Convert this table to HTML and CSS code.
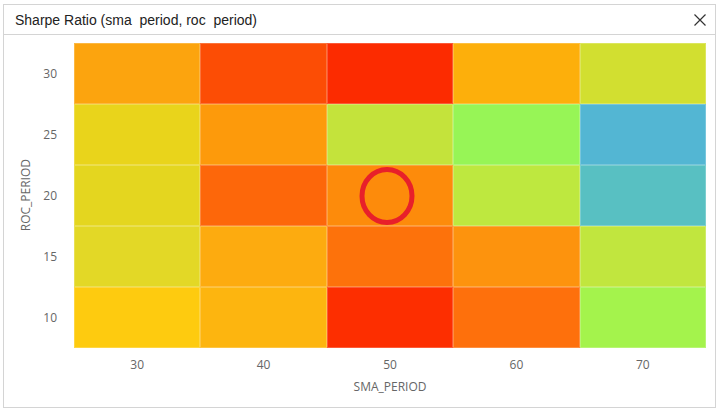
FILE: index.html
```html
<!DOCTYPE html>
<html>
<head>
<meta charset="utf-8">
<link rel="stylesheet" href="styles.css">
</head>
<body>
<div class="panel">
  <div class="header">
    <span class="title">Sharpe Ratio (sma&nbsp; period, roc&nbsp; period)</span>
    <svg class="close" width="12" height="12" viewBox="0 0 12 12"><path d="M0.5 0.5 L11.5 11.5 M11.5 0.5 L0.5 11.5" stroke="#333" stroke-width="1.2" fill="none"/></svg>
  </div>
  <div class="chart">
    <div class="plot-row">
      <div class="ytitle-col"><span class="ytitle">ROC_PERIOD</span></div>
      <div class="yticks">
        <span>30</span><span>25</span><span>20</span><span>15</span><span>10</span>
      </div>
      <div class="heatmap">
        <div class="cell c-fca40e"></div>
        <div class="cell c-fc4d05"></div>
        <div class="cell c-fc2b00"></div>
        <div class="cell c-fdaf0b"></div>
        <div class="cell c-d2df30"></div>

        <div class="cell c-e9d41b"></div>
        <div class="cell c-fd9a0b"></div>
        <div class="cell c-c4e33b"></div>
        <div class="cell c-97f556"></div>
        <div class="cell c-53b6d3"></div>

        <div class="cell c-e4d61f"></div>
        <div class="cell c-fd670a"></div>
        <div class="cell c-fd8b0b marked">
          <svg class="marker" width="58" height="62" viewBox="0 0 58 62"><ellipse cx="29" cy="31" rx="25" ry="26.5" fill="none" stroke="#e8202a" stroke-width="5"/></svg>
        </div>
        <div class="cell c-bee83f"></div>
        <div class="cell c-58c0c2"></div>

        <div class="cell c-e3d826"></div>
        <div class="cell c-fdab0f"></div>
        <div class="cell c-fd720b"></div>
        <div class="cell c-fd930d"></div>
        <div class="cell c-c1e63e"></div>

        <div class="cell c-fecb0f"></div>
        <div class="cell c-fdb50f"></div>
        <div class="cell c-fd2e00"></div>
        <div class="cell c-fe700c"></div>
        <div class="cell c-a4f34c"></div>
      </div>
    </div>
    <div class="xticks">
      <span>30</span><span>40</span><span>50</span><span>60</span><span>70</span>
    </div>
    <div class="xtitle">SMA_PERIOD</div>
  </div>
</div>
</body>
</html>
```
FILE: styles.css
```css
html, body {
  margin: 0;
  padding: 0;
  background: #ffffff;
}

.panel {
  box-sizing: border-box;
  width: 713px;
  height: 404px;
  margin: 4px 0 0 3px;
  border: 1px solid #d4d4d4;
  background: #ffffff;
  display: flex;
  flex-direction: column;
}

.header {
  height: 29px;
  border-bottom: 1px solid #d4d4d4;
  display: flex;
  align-items: center;
  justify-content: space-between;
  padding: 0 9px 0 11px;
}

.title {
  font-family: "Liberation Sans", Arial, sans-serif;
  font-size: 14px;
  color: #222222;
}

.close {
  display: block;
  margin-top: 1px;
}

.chart {
  padding-top: 8px;
  display: flex;
  flex-direction: column;
  font-family: "Open Sans", "Liberation Sans", sans-serif;
  font-size: 12px;
  color: #666666;
}

.plot-row {
  display: flex;
  height: 305px;
}

.ytitle-col {
  box-sizing: border-box;
  width: 30px;
  padding-left: 14px;
  display: flex;
  align-items: center;
}

.ytitle {
  writing-mode: vertical-rl;
  transform: rotate(180deg);
  line-height: 16px;
  width: 16px;
  white-space: nowrap;
}

.yticks {
  box-sizing: border-box;
  width: 40px;
  padding-right: 17px;
  display: grid;
  grid-template-rows: repeat(5, 61px);
  align-items: center;
  justify-items: end;
  line-height: 16px;
}

.heatmap {
  width: 632px;
  display: grid;
  grid-template-columns: repeat(5, 1fr);
  grid-template-rows: repeat(5, 61px);
}

.cell {
  box-sizing: border-box;
  border: 1px solid rgba(255, 255, 255, 0.22);
}

.marked {
  position: relative;
}

.marker {
  position: absolute;
  left: 50%;
  top: 50%;
  margin-left: -32px;
  margin-top: -31px;
}

.xticks {
  margin-left: 70px;
  width: 632px;
  margin-top: 7px;
  height: 20px;
  display: grid;
  grid-template-columns: repeat(5, 1fr);
  justify-items: center;
  align-items: center;
  line-height: 16px;
}

.xtitle {
  margin-left: 70px;
  width: 632px;
  height: 24px;
  line-height: 24px;
  text-align: center;
}

.c-fca40e { background: #fca40e; }
.c-fc4d05 { background: #fc4d05; }
.c-fc2b00 { background: #fc2b00; }
.c-fdaf0b { background: #fdaf0b; }
.c-d2df30 { background: #d2df30; }
.c-e9d41b { background: #e9d41b; }
.c-fd9a0b { background: #fd9a0b; }
.c-c4e33b { background: #c4e33b; }
.c-97f556 { background: #97f556; }
.c-53b6d3 { background: #53b6d3; }
.c-e4d61f { background: #e4d61f; }
.c-fd670a { background: #fd670a; }
.c-fd8b0b { background: #fd8b0b; }
.c-bee83f { background: #bee83f; }
.c-58c0c2 { background: #58c0c2; }
.c-e3d826 { background: #e3d826; }
.c-fdab0f { background: #fdab0f; }
.c-fd720b { background: #fd720b; }
.c-fd930d { background: #fd930d; }
.c-c1e63e { background: #c1e63e; }
.c-fecb0f { background: #fecb0f; }
.c-fdb50f { background: #fdb50f; }
.c-fd2e00 { background: #fd2e00; }
.c-fe700c { background: #fe700c; }
.c-a4f34c { background: #a4f34c; }
```
